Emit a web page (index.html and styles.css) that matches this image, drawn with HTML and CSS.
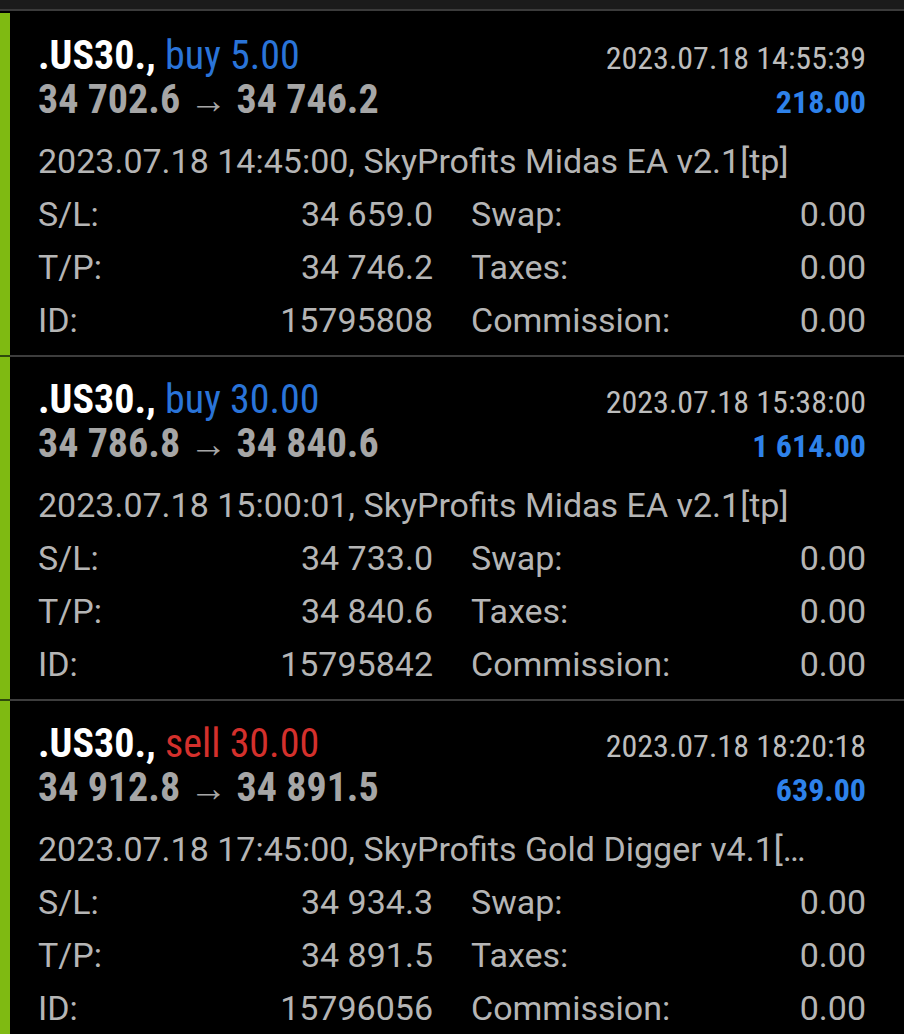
FILE: index.html
```html
<!DOCTYPE html>
<html lang="en">
<head>
    <meta charset="UTF-8">
    <meta name="viewport" content="width=device-width, initial-scale=1.0">
    <title>History</title>
    <link rel="stylesheet" href="styles.css">
</head>
<body>
    <div class="topbar"></div>
    <div class="deals">
        <div class="deal">
            <div class="head">
                <div class="title">.US30., <span class="buy">buy 5.00</span></div>
                <div class="time">2023.07.18 14:55:39</div>
                <div class="prices">34 702.6 <span class="arrow">&rarr;</span> 34 746.2</div>
                <div class="profit">218.00</div>
            </div>
            <div class="comment">2023.07.18 14:45:00, SkyProfits Midas EA v2.1[tp]</div>
            <div class="stats">
                <div class="stat"><span>S/L:</span><span>34 659.0</span></div>
                <div class="stat"><span>Swap:</span><span>0.00</span></div>
                <div class="stat"><span>T/P:</span><span>34 746.2</span></div>
                <div class="stat"><span>Taxes:</span><span>0.00</span></div>
                <div class="stat"><span>ID:</span><span>15795808</span></div>
                <div class="stat"><span>Commission:</span><span>0.00</span></div>
            </div>
        </div>
        <div class="divider"></div>
        <div class="deal">
            <div class="head">
                <div class="title">.US30., <span class="buy">buy 30.00</span></div>
                <div class="time">2023.07.18 15:38:00</div>
                <div class="prices">34 786.8 <span class="arrow">&rarr;</span> 34 840.6</div>
                <div class="profit">1 614.00</div>
            </div>
            <div class="comment">2023.07.18 15:00:01, SkyProfits Midas EA v2.1[tp]</div>
            <div class="stats">
                <div class="stat"><span>S/L:</span><span>34 733.0</span></div>
                <div class="stat"><span>Swap:</span><span>0.00</span></div>
                <div class="stat"><span>T/P:</span><span>34 840.6</span></div>
                <div class="stat"><span>Taxes:</span><span>0.00</span></div>
                <div class="stat"><span>ID:</span><span>15795842</span></div>
                <div class="stat"><span>Commission:</span><span>0.00</span></div>
            </div>
        </div>
        <div class="divider"></div>
        <div class="deal">
            <div class="head">
                <div class="title">.US30., <span class="sell">sell 30.00</span></div>
                <div class="time">2023.07.18 18:20:18</div>
                <div class="prices">34 912.8 <span class="arrow">&rarr;</span> 34 891.5</div>
                <div class="profit">639.00</div>
            </div>
            <div class="comment">2023.07.18 17:45:00, SkyProfits Gold Digger v4.1[&hellip;</div>
            <div class="stats">
                <div class="stat"><span>S/L:</span><span>34 934.3</span></div>
                <div class="stat"><span>Swap:</span><span>0.00</span></div>
                <div class="stat"><span>T/P:</span><span>34 891.5</span></div>
                <div class="stat"><span>Taxes:</span><span>0.00</span></div>
                <div class="stat"><span>ID:</span><span>15796056</span></div>
                <div class="stat"><span>Commission:</span><span>0.00</span></div>
            </div>
        </div>
    </div>
</body>
</html>
```

FILE: styles.css
```css
body {
    margin: 0;
    background: #000;
    font-family: Roboto, 'Noto Sans', sans-serif;
    color: #b5b5b5;
    overflow: hidden;
}
.topbar {
    height: 9px;
    background: #1b1b1b;
    border-bottom: 2px solid #3b3b3b;
}
.deals {
    padding-top: 2px;
}
.deal {
    border-left: 10px solid #7fba12;
    padding: 21px 38px 8px 28px;
}
.divider {
    height: 2px;
    background: linear-gradient(to right, #2f4a0c 10px, #3d3d3d 10px);
}
.head {
    display: grid;
    grid-template-columns: 1fr auto;
    align-items: baseline;
    font-stretch: 75%;
}
.title {
    font-size: 40px;
    line-height: 44px;
    font-weight: bold;
    color: #fff;
}
.buy {
    font-weight: normal;
    color: #2a74d8;
}
.sell {
    font-weight: normal;
    color: #d4302c;
}
.prices {
    font-size: 40px;
    line-height: 44px;
    font-weight: bold;
    color: #a6a6a6;
}
.arrow {
    font-weight: normal;
    font-size: 38px;
}
.time {
    font-size: 32px;
    line-height: 32px;
    text-align: right;
    color: #bdbdbd;
}
.profit {
    font-size: 32px;
    line-height: 32px;
    font-weight: bold;
    text-align: right;
    color: #2e82ea;
}
.comment {
    margin-top: 13px;
    font-size: 34px;
    line-height: 53px;
    white-space: nowrap;
    overflow: hidden;
}
.stats {
    display: grid;
    grid-template-columns: 1fr 1fr;
    column-gap: 38px;
    font-size: 34px;
    line-height: 53px;
}
.stat {
    display: flex;
    justify-content: space-between;
}
```
